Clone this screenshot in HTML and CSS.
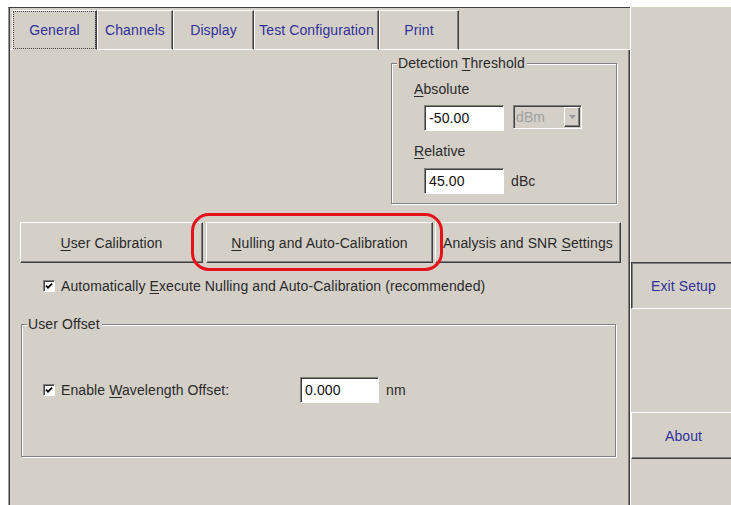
FILE: index.html
```html
<!DOCTYPE html>
<html lang="en">
<head>
<meta charset="utf-8">
<title>Setup</title>
<link rel="stylesheet" href="styles.css">
</head>
<body>
<div class="window">
  <div class="main">
    <div class="tabs">
      <div class="tab-stub"></div>
      <div class="tab tab-general active">General</div>
      <div class="tab tab-channels">Channels</div>
      <div class="tab tab-display">Display</div>
      <div class="tab tab-test">Test Configuration</div>
      <div class="tab tab-print">Print</div>
      <div class="tab-fill"></div>
    </div>

    <div class="page">
      <div class="top-row">
        <div class="group group-threshold">
          <div class="group-title">Detection <u>T</u>hreshold</div>
          <div class="group-body threshold-body">
            <div class="label"><u>A</u>bsolute</div>
            <div class="field-row field-row-abs">
              <input class="field" type="text" value="-50.00">
              <div class="select">
                <span class="select-val">dBm</span>
                <span class="select-btn">
                  <svg width="7" height="4" viewBox="0 0 7 4"><polygon points="0,0 7,0 3.5,4" fill="#9a9a9a"/></svg>
                </span>
              </div>
            </div>
            <div class="label label-rel"><u>R</u>elative</div>
            <div class="field-row field-row-rel">
              <input class="field" type="text" value="45.00">
              <span class="unit">dBc</span>
            </div>
          </div>
        </div>
      </div>

      <div class="btn-row">
        <div class="btn btn-user"><span><u>U</u>ser Calibration</span></div>
        <div class="btn btn-null"><span><u>N</u>ulling and Auto-Calibration</span></div>
        <div class="btn btn-snr"><span>Analysis and SNR <u>S</u>ettings</span></div>
        <div class="highlight"></div>
      </div>

      <div class="check-row check-row-auto">
        <span class="check">
          <svg width="8" height="8" viewBox="0 0 8 8"><path d="M1 3.6 L3 5.8 L7 1.6" stroke="#000" stroke-width="1.8" fill="none"/></svg>
        </span>
        <span>Automatically <u>E</u>xecute Nulling and Auto-Calibration (recommended)</span>
      </div>

      <div class="group group-offset">
        <div class="group-title">User Offset</div>
        <div class="group-body offset-body">
          <div class="check-row check-row-offset">
            <span class="check">
              <svg width="8" height="8" viewBox="0 0 8 8"><path d="M1 3.6 L3 5.8 L7 1.6" stroke="#000" stroke-width="1.8" fill="none"/></svg>
            </span>
            <span class="offset-label">Enable <u>W</u>avelength Offset:</span>
            <input class="field field-offset" type="text" value="0.000">
            <span class="unit">nm</span>
          </div>
        </div>
      </div>
    </div>
  </div>

  <div class="side">
    <div class="side-btn side-exit">Exit Setup</div>
    <div class="side-btn side-about">About</div>
  </div>
</div>
</body>
</html>
```
FILE: styles.css
```css
* {
  box-sizing: border-box;
}

html,
body {
  margin: 0;
  padding: 0;
  background: #fff;
  overflow: hidden;
}

body {
  font-family: "Liberation Sans", Arial, sans-serif;
  font-size: 14px;
  line-height: 16px;
  letter-spacing: 0.1px;
  color: #2a2a2a;
}

u {
  text-decoration-thickness: 1px;
  text-underline-offset: 2px;
}

.window {
  display: flex;
  width: 735px;
  height: 505px;
  padding: 7px 0 0 8px;
}

/* main settings panel */
.main {
  width: 622px;
  flex: none;
  display: flex;
  flex-direction: column;
  background: #d4d0c8;
  border-top: 1px solid #404040;
  border-left: 1px solid #9c9c9c;
  padding-left: 1px;
  box-shadow: inset 1px 0 0 #404040;
}

/* tab strip */
.tabs {
  display: flex;
  margin-top: 2px;
  height: 40px;
  flex: none;
}

.tab-stub {
  width: 2px;
  border-bottom: 1px solid #fff;
}

.tab-fill {
  flex: 1;
  border-bottom: 1px solid #fff;
}

.tab {
  height: 40px;
  display: flex;
  align-items: center;
  justify-content: center;
  color: #30309a;
  border-top: 1px solid #fff;
  border-left: 1px solid #fff;
  border-right: 1px solid #404040;
  border-bottom: 1px solid #fff;
  box-shadow: inset -1px 0 0 #808080;
  white-space: nowrap;
}

.tab.active {
  border-bottom-color: #d4d0c8;
  outline: 1px dotted #404040;
  outline-offset: -2px;
}

.tab-general { width: 85px; }
.tab-channels { width: 76px; }
.tab-display { width: 81px; }
.tab-test { width: 125px; }
.tab-print { width: 80px; }

/* tab page */
.page {
  flex: 1;
  border-right: 1px solid #404040;
  box-shadow: inset -1px 0 0 #808080;
  display: flex;
  flex-direction: column;
}

.top-row {
  display: flex;
  justify-content: flex-end;
  padding-right: 12px;
  margin-top: 13px;
}

/* etched group boxes */
.group {
  border: 1px solid #808080;
  box-shadow: 1px 1px 0 #fff, inset 1px 1px 0 #fff;
}

.group-title {
  width: max-content;
  margin: -9px 0 0 5px;
  padding: 0 2px 0 1px;
  background: #d4d0c8;
  line-height: 16px;
}

.group-threshold {
  width: 226px;
}

.threshold-body {
  padding: 0 0 9px 22px;
}

.label {
  margin-top: 10px;
}

.label-rel {
  margin-top: 12px;
}

.field-row {
  display: flex;
  align-items: flex-start;
  margin-left: 10px;
}

.field-row-abs {
  margin-top: 8px;
}

.field-row-rel {
  margin-top: 9px;
  align-items: center;
}

.field {
  width: 80px;
  height: 26px;
  margin: 0;
  padding: 0 0 0 4px;
  font: inherit;
  letter-spacing: inherit;
  color: #111;
  background: #fff;
  border: 1px solid;
  border-color: #808080 #fff #fff #808080;
  box-shadow: inset 1px 1px 0 #404040;
  outline: none;
}

.unit {
  margin-left: 7px;
}

/* disabled drop-down */
.select {
  width: 69px;
  height: 24px;
  margin-left: 9px;
  display: flex;
  align-items: stretch;
  padding: 1px;
  color: #a0a0a0;
  background: #d4d0c8;
  border: 1px solid;
  border-color: #808080 #fff #fff #808080;
  box-shadow: inset 1px 1px 0 #404040;
}

.select-val {
  flex: 1;
  display: flex;
  align-items: center;
  padding-left: 1px;
}

.select-btn {
  width: 16px;
  display: flex;
  align-items: center;
  justify-content: center;
  border: 1px solid;
  border-color: #fff #404040 #404040 #fff;
  box-shadow: inset -1px -1px 0 #808080;
}

/* command buttons */
.btn-row {
  position: relative;
  display: flex;
  margin-top: 18px;
  padding-left: 10px;
}

.btn {
  height: 41px;
  display: flex;
  align-items: center;
  justify-content: center;
  border: 1px solid;
  border-color: #fff #404040 #404040 #fff;
  box-shadow: inset -1px -1px 0 #808080;
  white-space: nowrap;
}

.btn-user { width: 183px; }
.btn-null { width: 227px; margin-left: 3px; }
.btn-snr { width: 186px; margin-left: 2px; }

.highlight {
  position: absolute;
  left: 181px;
  top: -9px;
  width: 252px;
  height: 58px;
  border: 3px solid #e5121b;
  border-radius: 18px;
  pointer-events: none;
}

/* check boxes */
.check-row {
  display: flex;
  align-items: center;
}

.check-row-auto {
  margin-top: 15px;
  padding-left: 33px;
}

.check {
  width: 12px;
  height: 12px;
  flex: none;
  margin-right: 6px;
  display: flex;
  align-items: center;
  justify-content: center;
  background: #fff;
  border: 1px solid;
  border-color: #808080 #fff #fff #808080;
  box-shadow: inset 1px 1px 0 #404040;
}

.group-offset {
  width: 595px;
  margin: 30px 0 0 11px;
}

.offset-body {
  padding: 0 0 53px 21px;
}

.check-row-offset {
  margin-top: 45px;
}

.offset-label {
  width: 239px;
  flex: none;
}

.field-offset {
  width: 79px;
}

/* side command column */
.side {
  width: 105px;
  flex: none;
  background: #d4d0c8;
  border-left: 1px solid #fff;
  display: flex;
  flex-direction: column;
}

.side-btn {
  height: 47px;
  display: flex;
  align-items: center;
  justify-content: center;
  color: #30309a;
}

.side-exit {
  margin-top: 255px;
  border-top: 1px solid #404040;
  border-left: 1px solid #404040;
  border-bottom: 1px solid #fff;
  box-shadow: inset 1px 1px 0 #808080;
}

.side-about {
  margin-top: 103px;
  border-top: 1px solid #fff;
  border-left: 1px solid #fff;
  border-bottom: 1px solid #404040;
  box-shadow: inset 0 -1px 0 #808080;
}
```
